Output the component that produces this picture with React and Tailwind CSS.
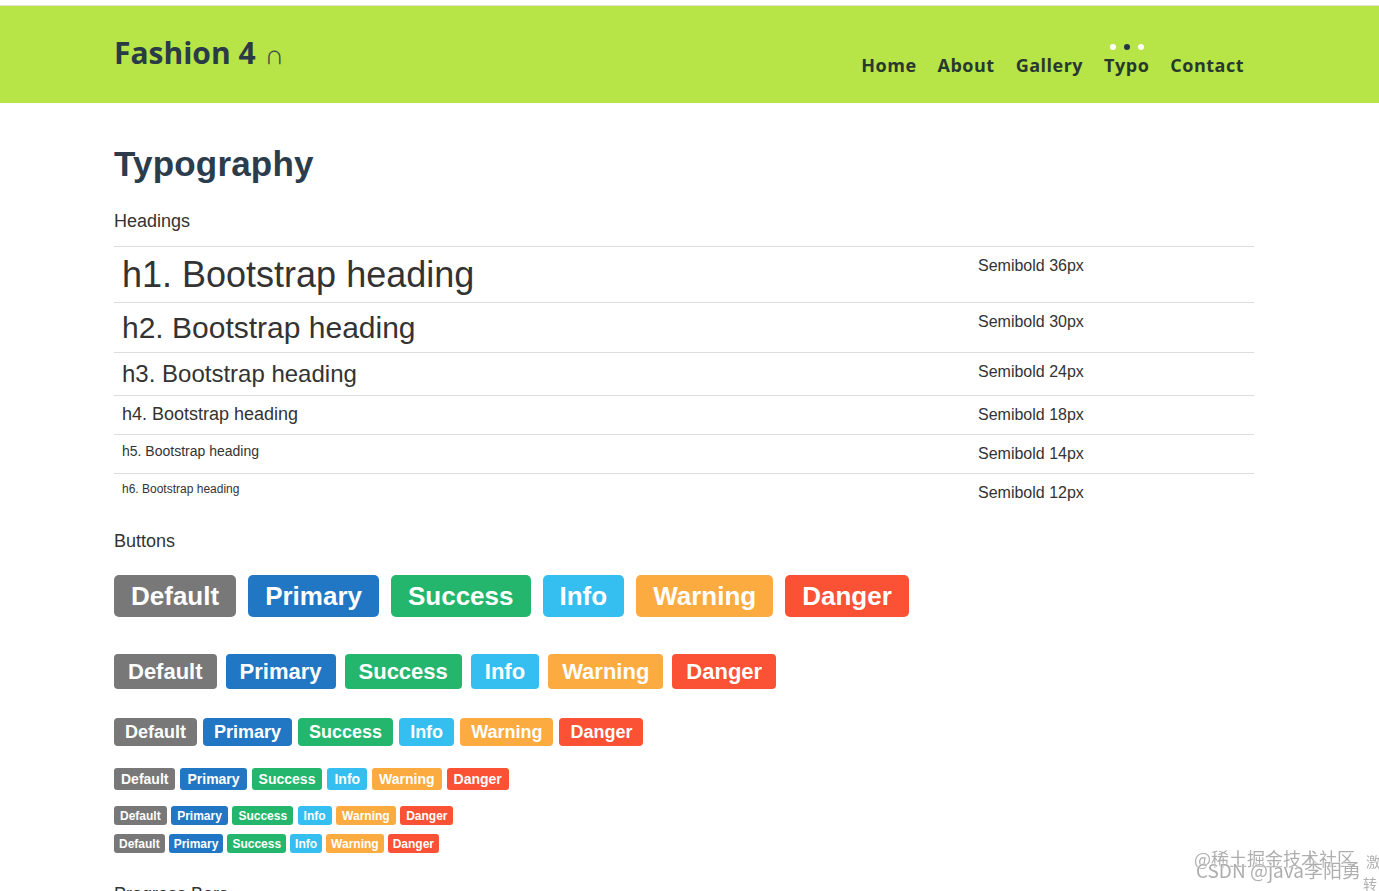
import React from "react";

const sans = { fontFamily: '"Liberation Sans", Arial, sans-serif' };

function Btn({ color, cls, children }) {
  return (
    <span className={`inline-flex items-center justify-center text-white font-bold ${color} ${cls}`}>
      {children}
    </span>
  );
}

const colors = {
  Default: "bg-[#787878]",
  Primary: "bg-[#2277c4]",
  Success: "bg-[#24b66c]",
  Info: "bg-[#35bef0]",
  Warning: "bg-[#fbab40]",
  Danger: "bg-[#fb5134]",
};
const names = ["Default", "Primary", "Success", "Info", "Warning", "Danger"];

function BtnRow({ rowCls, btnCls }) {
  return (
    <div className={`flex ${rowCls}`}>
      {names.map((n) => (
        <Btn key={n} color={colors[n]} cls={btnCls}>
          {n}
        </Btn>
      ))}
    </div>
  );
}

export default function App() {
  const rows = [
    { t: "h1. Bootstrap heading", cls: "text-[36px] leading-[39px]", s: "Semibold 36px" },
    { t: "h2. Bootstrap heading", cls: "text-[30px] leading-[33px]", s: "Semibold 30px" },
    { t: "h3. Bootstrap heading", cls: "text-[24px] leading-[26px]", s: "Semibold 24px" },
    { t: "h4. Bootstrap heading", cls: "text-[18px] leading-[20px]", s: "Semibold 18px" },
    { t: "h5. Bootstrap heading", cls: "text-[14px] leading-[16px]", s: "Semibold 14px" },
    { t: "h6. Bootstrap heading", cls: "text-[12px] leading-[14px]", s: "Semibold 12px" },
  ];
  return (
    <div className="relative bg-white min-h-[891px]" style={sans}>
      <div className="h-[6px] bg-white border-b border-[#e3e6c8]" />
      <header className="bg-[#b7e446] h-[97px]">
        <div className="ml-[114px] w-[1140px] flex justify-between" style={{ fontFamily: '"Open Sans", "Noto Sans", sans-serif' }}>
          <div className="pt-[32px] text-[30px] leading-none font-bold text-[#2a3b48] flex items-baseline">
            <span>Fashion 4</span>
            <span className="ml-[9px] text-[27px] font-normal text-[#3a4a4a]">∩</span>
          </div>
          <nav className="flex pt-[50px] pr-[10px] text-[18px] leading-none font-bold tracking-[0.5px] text-[#27382f] gap-[21px]">
            <span>Home</span>
            <span>About</span>
            <span>Gallery</span>
            <span className="relative">
              Typo
              <span className="absolute left-1/2 -translate-x-1/2 top-[-12px] flex gap-[8px]">
                <span className="w-[6px] h-[6px] rounded-full bg-white" />
                <span className="w-[6px] h-[6px] rounded-full bg-[#263544]" />
                <span className="w-[6px] h-[6px] rounded-full bg-white" />
              </span>
            </span>
            <span>Contact</span>
          </nav>
        </div>
      </header>

      <main className="ml-[114px] w-[1140px] text-[#333]">
        <h1 className="mt-[42px] text-[35px] leading-[38px] font-bold text-[#2b3c4c] tracking-[0.2px]">Typography</h1>
        <div className="mt-[25px] text-[18px] leading-[26px]">Headings</div>
        <table className="mt-[12px] w-full border-collapse">
          <tbody>
            {rows.map((r) => (
              <tr key={r.t} className="border-t border-[#dddddd]">
                <td className="w-[856px] p-[8px] align-top">
                  <div className={`font-normal ${r.cls}`}>{r.t}</div>
                </td>
                <td className="p-[8px] align-top text-[16px] leading-[22px]">{r.s}</td>
              </tr>
            ))}
          </tbody>
        </table>

        <div className="mt-[16px] text-[18px] leading-[26px]">Buttons</div>

        <BtnRow rowCls="mt-[21px] gap-[12px]" btnCls="h-[42px] px-[17px] text-[26px] rounded-[5px]" />
        <BtnRow rowCls="mt-[37px] gap-[9px]" btnCls="h-[35px] px-[14px] text-[22px] rounded-[4px]" />
        <BtnRow rowCls="mt-[29px] gap-[6px]" btnCls="h-[28px] px-[11px] text-[18px] rounded-[4px]" />
        <BtnRow rowCls="mt-[22px] gap-[5px]" btnCls="h-[22px] px-[7px] text-[14px] rounded-[3px]" />
        <BtnRow rowCls="mt-[16px] gap-[4.5px]" btnCls="h-[19px] px-[6px] text-[12px] rounded-[3px]" />
        <BtnRow rowCls="mt-[9px] gap-[4px]" btnCls="h-[19px] px-[5px] text-[12px] rounded-[3px]" />

        <div className="mt-[28px] text-[18px] leading-[26px]">Progress Bars</div>
        <div className="h-[200px]" />
      </main>

      <div
        className="fixed right-[18px] bottom-[11px] text-[#9a9a9a] opacity-80 pointer-events-none"
        style={{ fontFamily: '"Noto Sans CJK SC", "Noto Sans", sans-serif', textShadow: "0 0 2px #fff, 0 0 2px #fff" }}
      >
        <div className="text-[18px] leading-[20px]">@稀土掘金技术社区</div>
        <div className="text-[19px] leading-[20px] -mt-[8px] ml-[2px]">CSDN @java李阳勇</div>
      </div>
      <div
        className="fixed right-0 bottom-[22px] text-[14px] leading-[16px] text-[#b0b0b0] w-[13px] overflow-hidden pointer-events-none"
        style={{ fontFamily: '"Noto Sans CJK SC", sans-serif' }}
      >
        激
      </div>
      <div
        className="fixed right-0 bottom-[0px] text-[14px] leading-[16px] text-[#b0b0b0] w-[16px] overflow-hidden pointer-events-none"
        style={{ fontFamily: '"Noto Sans CJK SC", sans-serif' }}
      >
        转
      </div>
    </div>
  );
}
